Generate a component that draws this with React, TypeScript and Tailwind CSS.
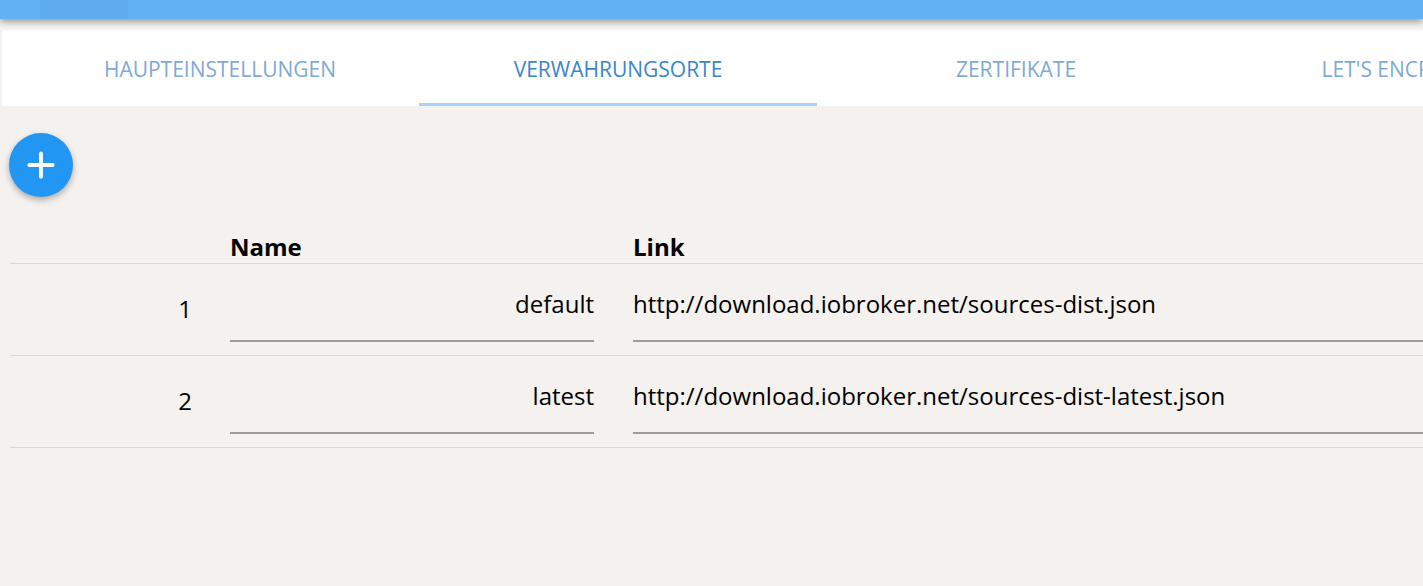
import { Plus } from "lucide-react";

const tabs = ["Haupteinstellungen", "Verwahrungsorte", "Zertifikate", "Let's Encrypt SSL"];

const rows = [
  { id: 1, name: "default", link: "http://download.iobroker.net/sources-dist.json" },
  { id: 2, name: "latest", link: "http://download.iobroker.net/sources-dist-latest.json" },
];

export default function App() {
  const active = 1;

  return (
    <div
      className="w-[1423px] h-[586px] overflow-hidden bg-[#f4f1ee] text-black"
      style={{ fontFamily: '"Open Sans", "Noto Sans", sans-serif' }}
    >
      {/* app bar */}
      <div className="relative z-10 flex h-[19px] bg-[#62b1f3] shadow-[0_3px_6px_rgba(0,0,0,0.35)]">
        <div className="w-[40px]" />
        <div className="w-[88px] bg-[#5eacee]" />
      </div>

      {/* tabs */}
      <div className="mt-[11px] ml-[2px] flex h-[76px] bg-white">
        <div className="w-[19px] shrink-0" />
        {tabs.map((t, i) => (
          <div
            key={t}
            className={
              "relative flex w-[398px] shrink-0 items-center justify-center pt-[4px] text-[21px] uppercase " +
              (i === active ? "text-[#3a86cc]" : "text-[#7eaad6]")
            }
          >
            <span className="whitespace-nowrap">{t}</span>
            {i === active && <div className="absolute bottom-0 left-0 right-0 h-[3px] bg-[#a9d0f0]" />}
          </div>
        ))}
      </div>

      {/* content */}
      <div className="pl-[10px]">
        <div className="pt-[27px]">
          <button className="-ml-[1px] flex h-[64px] w-[64px] items-center justify-center rounded-full bg-[#2196f3] text-white shadow-[0_3px_6px_rgba(0,0,0,0.3)]">
            <Plus size={40} strokeWidth={2.3} />
          </button>
        </div>

        <table className="mt-[29px] w-full border-collapse text-[24px]">
          <thead>
            <tr className="border-b border-[#d9d6d3]">
              <th className="w-[220px] p-0" />
              <th className="h-[37px] w-[403px] p-0 pr-[39px] pt-[5px] text-left align-top text-[24px] font-bold leading-[32px]">
                Name
              </th>
              <th className="p-0 pt-[5px] text-left align-top text-[24px] font-bold leading-[32px]">Link</th>
            </tr>
          </thead>
          <tbody>
            {rows.map((r) => (
              <tr key={r.id} className="h-[92px] border-b border-[#d9d6d3]">
                <td className="p-0 pr-[38px] pb-[2px] text-right align-middle">{r.id}</td>
                <td className="p-0 pr-[39px] align-top">
                  <div className="mt-[20px] border-b-2 border-[#9e9c9a] pb-[16px] text-right leading-[40px]">
                    {r.name}
                  </div>
                </td>
                <td className="p-0 align-top">
                  <div className="mt-[20px] whitespace-nowrap border-b-2 border-[#9e9c9a] pb-[16px] text-left leading-[40px]">
                    {r.link}
                  </div>
                </td>
              </tr>
            ))}
          </tbody>
        </table>
      </div>
    </div>
  );
}
